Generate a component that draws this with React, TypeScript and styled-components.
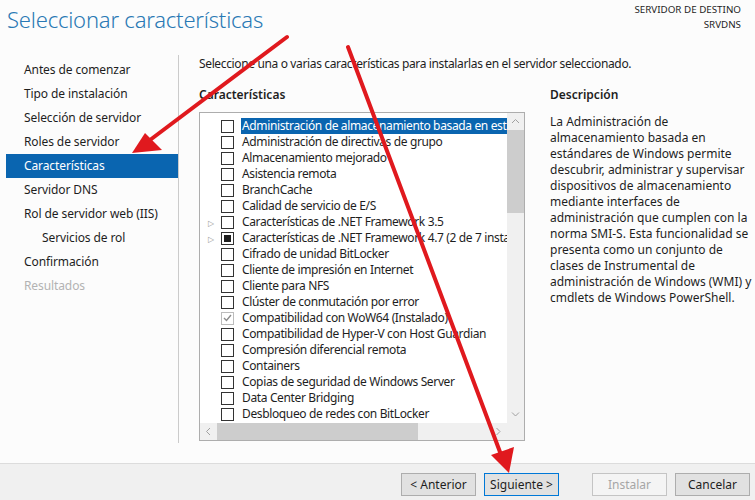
import React from 'react';
import styled, { createGlobalStyle } from 'styled-components';

const GlobalStyle = createGlobalStyle`
  html, body {
    margin: 0;
    padding: 0;
    background: #fcfcfc;
  }
  body {
    font-family: 'Noto Sans', 'Open Sans', sans-serif;
    font-size: 12px;
    color: #1e1e1e;
  }
`;

const Page = styled.div`
  position: relative;
  width: 755px;
  height: 500px;
  display: flex;
  flex-direction: column;
  background: #fcfcfc;
  overflow: hidden;
`;

const Header = styled.header`
  height: 55px;
  display: flex;
  justify-content: space-between;
  align-items: flex-start;
  padding: 0 14px 0 7px;
`;

const Title = styled.h1`
  margin: 4px 0 0;
  font-size: 22px;
  font-weight: 300;
  color: #2a79b4;
  letter-spacing: -0.2px;
`;

const Target = styled.div`
  margin-top: 2px;
  text-align: right;
  font-size: 9.8px;
  line-height: 15px;
  color: #1e1e1e;
`;

const Body = styled.div`
  flex: 1;
  display: flex;
  padding-bottom: 20px;
`;

const Nav = styled.nav`
  width: 178px;
  border-right: 1px solid #cbcbcb;
  padding-top: 3px;
  display: flex;
  flex-direction: column;
`;

const NavItem = styled.div<{ $active?: boolean; $sub?: boolean; $off?: boolean }>`
  height: 24px;
  line-height: 24px;
  margin-left: 6px;
  padding-left: ${(p) => (p.$sub ? 36 : 18)}px;
  font-size: 12px;
  letter-spacing: -0.1px;
  white-space: nowrap;
  background: ${(p) => (p.$active ? '#0a65b0' : 'transparent')};
  color: ${(p) => (p.$active ? '#ffffff' : p.$off ? '#b3b3b3' : '#1e1e1e')};
`;

const Content = styled.main`
  flex: 1;
  padding-left: 20px;
  display: flex;
  flex-direction: column;
`;

const Intro = styled.p`
  margin: 1px 0 0;
  height: 16px;
  line-height: 16px;
  letter-spacing: -0.36px;
  white-space: nowrap;
`;

const Columns = styled.div`
  margin-top: 15px;
  display: flex;
  gap: 25px;
`;

const ListCol = styled.div`
  width: 326px;
  display: flex;
  flex-direction: column;
`;

const Heading = styled.div`
  height: 16px;
  line-height: 16px;
  font-weight: 600;
  margin-bottom: 9px;
`;

const ListBox = styled.div`
  height: 329px;
  border: 1px solid #adadad;
  background: #ffffff;
  display: grid;
  grid-template-columns: 1fr 17px;
  grid-template-rows: 1fr 17px;
  box-sizing: border-box;
`;

const Rows = styled.div`
  overflow: hidden;
  padding-top: 5px;
`;

const Row = styled.div`
  height: 16px;
  display: flex;
  align-items: center;
  white-space: nowrap;
  overflow: hidden;
`;

const Expander = styled.span`
  width: 21px;
  flex-shrink: 0;
  display: flex;
  justify-content: center;
  color: #9a9a9a;
  font-size: 8px;
`;

const Box = styled.span<{ $muted?: boolean }>`
  width: 11px;
  height: 11px;
  flex-shrink: 0;
  border: 1px solid ${(p) => (p.$muted ? '#bcbcbc' : '#333333')};
  background: #ffffff;
  display: flex;
  align-items: center;
  justify-content: center;
  margin-right: 7px;
`;

const Partial = styled.span`
  width: 7px;
  height: 7px;
  background: #1e1e1e;
`;

const Label = styled.span<{ $selected?: boolean }>`
  flex: 1;
  line-height: 16px;
  padding-left: 1px;
  letter-spacing: -0.36px;
  background: ${(p) => (p.$selected ? '#0a65b0' : 'transparent')};
  color: ${(p) => (p.$selected ? '#ffffff' : '#1e1e1e')};
`;

const VTrack = styled.div`
  background: #f0f0f0;
  display: flex;
  flex-direction: column;
  align-items: center;
`;

const HTrack = styled.div`
  background: #f0f0f0;
  display: flex;
  align-items: center;
`;

const Corner = styled.div`
  background: #f0f0f0;
`;

const ArrowCell = styled.div`
  width: 17px;
  height: 17px;
  flex-shrink: 0;
  display: flex;
  align-items: center;
  justify-content: center;
`;

const VThumb = styled.div`
  width: 17px;
  height: 83px;
  background: #cdcdcd;
`;

const HThumb = styled.div`
  height: 17px;
  width: 201px;
  background: #cdcdcd;
`;

const Spacer = styled.div`
  flex: 1;
`;

const DescCol = styled.div`
  width: 200px;
  display: flex;
  flex-direction: column;
`;

const DescBody = styled.div`
  padding-top: 2px;
`;

const DescText = styled.p`
  margin: 0;
  line-height: 16px;
  white-space: nowrap;
`;

const Footer = styled.footer`
  height: 37px;
  border-top: 1px solid #dcdcdc;
  background: #f0f0f0;
  display: flex;
  align-items: flex-start;
  justify-content: flex-end;
  padding: 9px 5px 0 0;
  box-sizing: border-box;
  gap: 8px;
`;

const Button = styled.button<{ $focus?: boolean; $gapLeft?: number }>`
  width: 75px;
  height: 23px;
  margin-left: ${(p) => p.$gapLeft || 0}px;
  font-family: inherit;
  font-size: 12px;
  padding: 0;
  background: #e1e1e1;
  color: #1e1e1e;
  border: 1px solid ${(p) => (p.$focus ? '#0078d7' : '#adadad')};
  &:disabled {
    background: #f4f4f4;
    color: #a6a6a6;
    border-color: #c4c4c4;
  }
`;

const Overlay = styled.svg`
  position: absolute;
  left: 0;
  top: 0;
  pointer-events: none;
`;

const Chevron = ({ dir }: { dir: 'up' | 'down' | 'left' | 'right' }) => {
  const d = {
    up: 'M1 5 L4.5 1.5 L8 5',
    down: 'M1 1.5 L4.5 5 L8 1.5',
    left: 'M5 1 L1.5 4.5 L5 8',
    right: 'M1.5 1 L5 4.5 L1.5 8',
  }[dir];
  const horiz = dir === 'left' || dir === 'right';
  return (
    <svg width={horiz ? 7 : 9} height={horiz ? 9 : 7} viewBox={horiz ? '0 0 7 9' : '0 0 9 7'}>
      <path d={d} fill="none" stroke="#a0a0a0" strokeWidth="1" />
    </svg>
  );
};

type Feature = {
  label: string;
  expand?: boolean;
  state?: 'partial' | 'installed';
  selected?: boolean;
};

const features: Feature[] = [
  { label: 'Administración de almacenamiento basada en estándares', selected: true },
  { label: 'Administración de directivas de grupo' },
  { label: 'Almacenamiento mejorado' },
  { label: 'Asistencia remota' },
  { label: 'BranchCache' },
  { label: 'Calidad de servicio de E/S' },
  { label: 'Características de .NET Framework 3.5', expand: true },
  { label: 'Características de .NET Framework 4.7 (2 de 7 instalados)', expand: true, state: 'partial' },
  { label: 'Cifrado de unidad BitLocker' },
  { label: 'Cliente de impresión en Internet' },
  { label: 'Cliente para NFS' },
  { label: 'Clúster de conmutación por error' },
  { label: 'Compatibilidad con WoW64 (Instalado)', state: 'installed' },
  { label: 'Compatibilidad de Hyper-V con Host Guardian' },
  { label: 'Compresión diferencial remota' },
  { label: 'Containers' },
  { label: 'Copias de seguridad de Windows Server' },
  { label: 'Data Center Bridging' },
  { label: 'Desbloqueo de redes con BitLocker' },
];

const description = [
  'La Administración de',
  'almacenamiento basada en',
  'estándares de Windows permite',
  'descubrir, administrar y supervisar',
  'dispositivos de almacenamiento',
  'mediante interfaces de',
  'administración que cumplen con la',
  'norma SMI-S. Esta funcionalidad se',
  'presenta como un conjunto de',
  'clases de Instrumental de',
  'administración de Windows (WMI) y',
  'cmdlets de Windows PowerShell.',
];

const App: React.FunctionComponent = () => {
  return (
    <Page>
      <GlobalStyle />
      <Header>
        <Title>Seleccionar características</Title>
        <Target>
          SERVIDOR DE DESTINO
          <br />
          SRVDNS
        </Target>
      </Header>
      <Body>
        <Nav>
          <NavItem>Antes de comenzar</NavItem>
          <NavItem>Tipo de instalación</NavItem>
          <NavItem>Selección de servidor</NavItem>
          <NavItem>Roles de servidor</NavItem>
          <NavItem $active>Características</NavItem>
          <NavItem>Servidor DNS</NavItem>
          <NavItem>Rol de servidor web (IIS)</NavItem>
          <NavItem $sub>Servicios de rol</NavItem>
          <NavItem>Confirmación</NavItem>
          <NavItem $off>Resultados</NavItem>
        </Nav>
        <Content>
          <Intro>Seleccione una o varias características para instalarlas en el servidor seleccionado.</Intro>
          <Columns>
            <ListCol>
              <Heading>Características</Heading>
              <ListBox>
                <Rows>
                  {features.map((f) => (
                    <Row key={f.label}>
                      <Expander>{f.expand ? '▷' : ''}</Expander>
                      <Box $muted={f.state === 'installed'}>
                        {f.state === 'partial' && <Partial />}
                        {f.state === 'installed' && (
                          <svg width="9" height="8" viewBox="0 0 9 8">
                            <path d="M1 4 L3.5 6.5 L8 1" fill="none" stroke="#8c8c8c" strokeWidth="1.4" />
                          </svg>
                        )}
                      </Box>
                      <Label $selected={f.selected}>{f.label}</Label>
                    </Row>
                  ))}
                </Rows>
                <VTrack>
                  <ArrowCell>
                    <Chevron dir="up" />
                  </ArrowCell>
                  <VThumb />
                  <Spacer />
                  <ArrowCell>
                    <Chevron dir="down" />
                  </ArrowCell>
                </VTrack>
                <HTrack>
                  <ArrowCell>
                    <Chevron dir="left" />
                  </ArrowCell>
                  <HThumb />
                  <Spacer />
                  <ArrowCell>
                    <Chevron dir="right" />
                  </ArrowCell>
                </HTrack>
                <Corner />
              </ListBox>
            </ListCol>
            <DescCol>
              <Heading>Descripción</Heading>
              <DescBody>
                {description.map((line) => (
                  <DescText key={line}>{line}</DescText>
                ))}
              </DescBody>
            </DescCol>
          </Columns>
        </Content>
      </Body>
      <Footer>
        <Button>&lt; Anterior</Button>
        <Button $focus>Siguiente &gt;</Button>
        <Button disabled $gapLeft={25}>
          Instalar
        </Button>
        <Button>Cancelar</Button>
      </Footer>
      <Overlay width="755" height="500" viewBox="0 0 755 500">
        <g stroke="#e0191e" strokeWidth="4" strokeLinecap="round" fill="#e0191e">
          <line x1="287" y1="37" x2="150" y2="140" />
          <line x1="348" y1="47" x2="500" y2="452" />
        </g>
        <polygon points="132,153 145,133 162,150" fill="#e0191e" />
        <polygon points="509,473 491,455 514,447" fill="#e0191e" />
      </Overlay>
    </Page>
  );
};

export default App;
